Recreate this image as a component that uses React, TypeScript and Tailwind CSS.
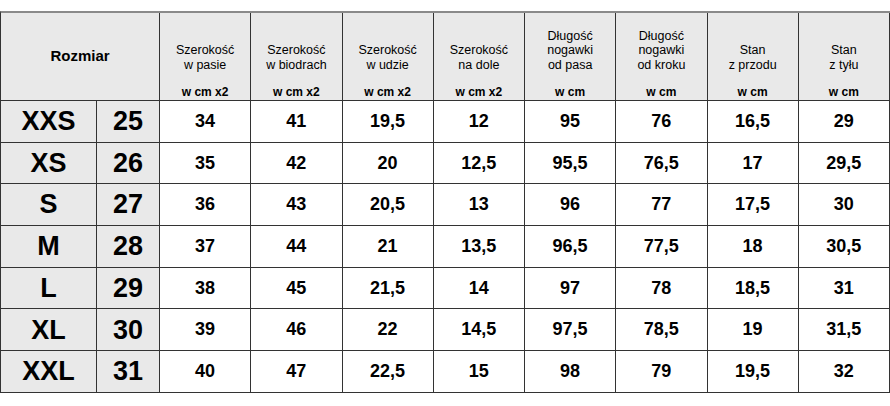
import { Fragment } from "react";

const columns = [
  { label: ["Szerokość", "w pasie"], unit: "w cm x2" },
  { label: ["Szerokość", "w biodrach"], unit: "w cm x2" },
  { label: ["Szerokość", "w udzie"], unit: "w cm x2" },
  { label: ["Szerokość", "na dole"], unit: "w cm x2" },
  { label: ["Długość", "nogawki", "od pasa"], unit: "w cm" },
  { label: ["Długość", "nogawki", "od kroku"], unit: "w cm" },
  { label: ["Stan", "z przodu"], unit: "w cm" },
  { label: ["Stan", "z tyłu"], unit: "w cm" },
];

const rows: [string, string, string[]][] = [
  ["XXS", "25", ["34", "41", "19,5", "12", "95", "76", "16,5", "29"]],
  ["XS", "26", ["35", "42", "20", "12,5", "95,5", "76,5", "17", "29,5"]],
  ["S", "27", ["36", "43", "20,5", "13", "96", "77", "17,5", "30"]],
  ["M", "28", ["37", "44", "21", "13,5", "96,5", "77,5", "18", "30,5"]],
  ["L", "29", ["38", "45", "21,5", "14", "97", "78", "18,5", "31"]],
  ["XL", "30", ["39", "46", "22", "14,5", "97,5", "78,5", "19", "31,5"]],
  ["XXL", "31", ["40", "47", "22,5", "15", "98", "79", "19,5", "32"]],
];

export default function App() {
  return (
    <div className="w-[890px] h-[406px] bg-white pt-[11px] font-['Liberation_Sans',Arial,sans-serif] text-black">
      <div className="grid w-[890px] grid-cols-[96px_63px_repeat(8,minmax(0,1fr))] grid-rows-[88px_repeat(7,41.7px)] border-t-2 border-t-[#8a8a8a] border-l-[1.5px] border-l-[#333]">
        {/* header */}
        <div className="col-span-2 flex items-center justify-center bg-[#e9e9e9] border-r border-b border-[#333] text-[15px] font-bold">
          Rozmiar
        </div>
        {columns.map((c, i) => (
          <div
            key={i}
            className="flex flex-col items-center justify-end bg-[#e9e9e9] border-r border-b border-[#333] pb-px text-center"
          >
            <div className="text-[12.5px] leading-[14.5px]">
              {c.label.map((l) => (
                <div key={l}>{l}</div>
              ))}
            </div>
            <div className="mt-[13px] text-[12px] leading-[14px] font-bold">{c.unit}</div>
          </div>
        ))}

        {/* rows */}
        {rows.map(([size, num, vals]) => (
          <Fragment key={size}>
            <div className="flex items-center justify-center bg-[#e9e9e9] border-r border-b border-[#333] text-[27px] font-bold">
              {size}
            </div>
            <div className="flex items-center justify-center bg-[#e9e9e9] border-r border-b border-[#333] text-[27px] font-bold">
              {num}
            </div>
            {vals.map((v, j) => (
              <div key={j} className="flex items-center justify-center bg-white border-r border-b border-[#333] text-[18px] font-bold">
                {v}
              </div>
            ))}
          </Fragment>
        ))}
      </div>
    </div>
  );
}
